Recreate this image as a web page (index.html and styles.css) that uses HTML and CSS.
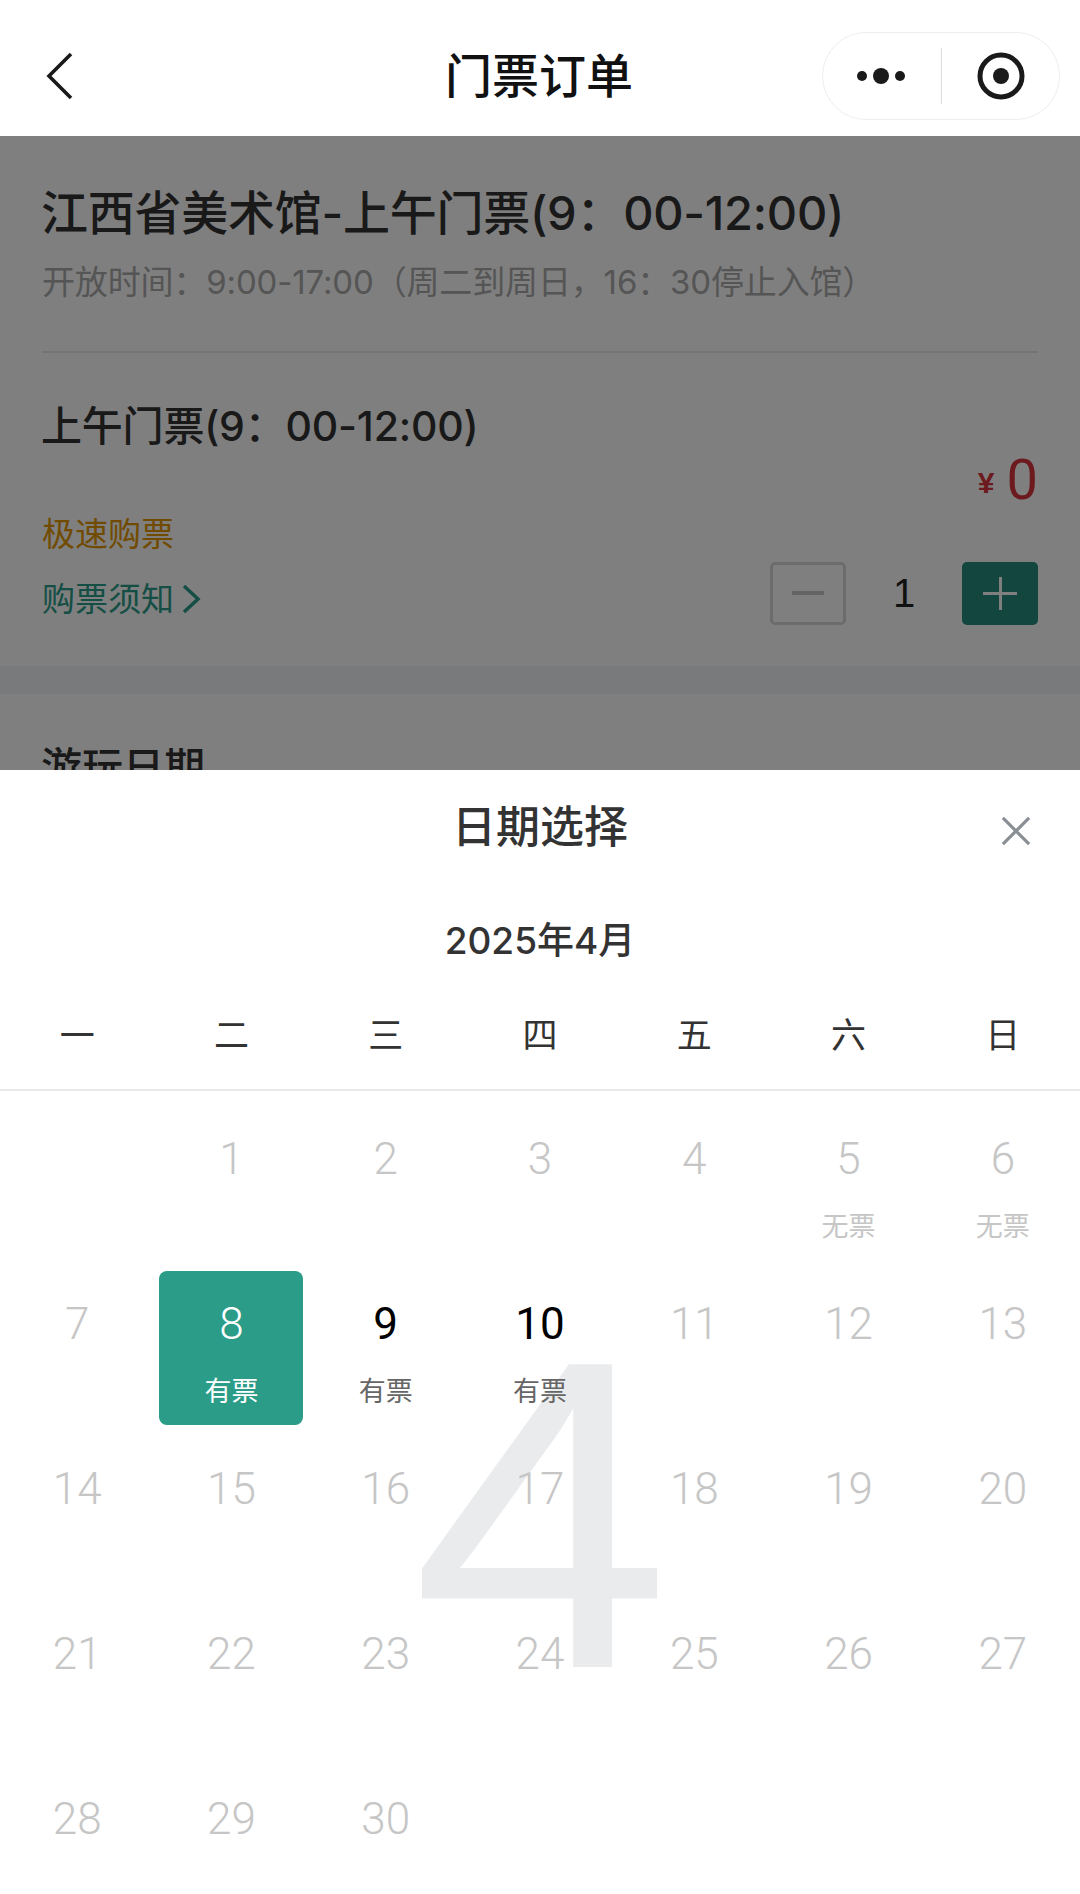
FILE: index.html
```html
<!DOCTYPE html>
<html lang="zh-CN">
<head>
<meta charset="utf-8">
<title>门票订单</title>
<link rel="stylesheet" href="styles.css">
</head>
<body>
<div class="page">
  <header class="nav">
    <svg class="back" viewBox="0 0 30 50" width="30" height="50"><path d="M27 3 L5 25 L27 47" fill="none" stroke="#1a1a1a" stroke-width="3.6"/></svg>
    <h1 class="nav-title">门票订单</h1>
    <div class="capsule">
      <svg class="capsule-more" viewBox="0 0 50 20" width="50" height="20"><circle cx="6" cy="10" r="5" fill="#1a1a1a"/><circle cx="25" cy="10" r="8" fill="#1a1a1a"/><circle cx="44" cy="10" r="5" fill="#1a1a1a"/></svg>
      <span class="capsule-line"></span>
      <svg class="capsule-close" viewBox="0 0 48 48" width="48" height="48"><circle cx="24" cy="24" r="21" fill="none" stroke="#1a1a1a" stroke-width="5"/><circle cx="24" cy="24" r="8" fill="#1a1a1a"/></svg>
    </div>
  </header>
  <main class="content">
    <section class="hero">
      <h2 class="hero-title">江西省美术馆-上午门票(9：00-12:00)</h2>
      <p class="hero-sub">开放时间：9:00-17:00（周二到周日，16：30停止入馆）</p>
    </section>
    <section class="ticket">
      <h3 class="ticket-name">上午门票(9：00-12:00)</h3>
      <div class="ticket-body">
        <div class="ticket-left">
          <div class="fast">极速购票</div>
          <div class="notice">购票须知<svg class="notice-arrow" viewBox="0 0 20 32" width="20" height="32"><path d="M3 3 L17 16 L3 29" fill="none" stroke="#2a9c88" stroke-width="3.5"/></svg></div>
        </div>
        <div class="ticket-right">
          <div class="price"><span class="yen">¥</span><span class="amount">0</span></div>
          <div class="stepper">
            <span class="step step-minus"></span>
            <span class="qty">1</span>
            <span class="step step-plus"></span>
          </div>
        </div>
      </div>
    </section>
    <div class="band"></div>
    <section class="visit">
      <h3 class="visit-title">游玩日期</h3>
    </section>
  </main>
  <div class="mask"></div>
  <aside class="sheet">
    <div class="sheet-head">
      <h2 class="sheet-title">日期选择</h2>
      <svg class="sheet-close" viewBox="0 0 32 32" width="30" height="30"><path d="M2 2 L30 30 M30 2 L2 30" stroke="#8a8f96" stroke-width="3.4" fill="none"/></svg>
    </div>
    <div class="month">2025年4月</div>
    <div class="week">
      <span>一</span><span>二</span><span>三</span><span>四</span><span>五</span><span>六</span><span>日</span>
    </div>
    <div class="calendar">
      <div class="watermark">4</div>
      <div class="days">
        <div class="day"></div>
        <div class="day"><span class="num">1</span></div>
        <div class="day"><span class="num">2</span></div>
        <div class="day"><span class="num">3</span></div>
        <div class="day"><span class="num">4</span></div>
        <div class="day"><span class="num">5</span><span class="tag">无票</span></div>
        <div class="day"><span class="num">6</span><span class="tag">无票</span></div>
        <div class="day"><span class="num">7</span></div>
        <div class="day selected"><span class="num">8</span><span class="tag">有票</span></div>
        <div class="day open"><span class="num">9</span><span class="tag">有票</span></div>
        <div class="day open"><span class="num">10</span><span class="tag">有票</span></div>
        <div class="day"><span class="num">11</span></div>
        <div class="day"><span class="num">12</span></div>
        <div class="day"><span class="num">13</span></div>
        <div class="day"><span class="num">14</span></div>
        <div class="day"><span class="num">15</span></div>
        <div class="day"><span class="num">16</span></div>
        <div class="day"><span class="num">17</span></div>
        <div class="day"><span class="num">18</span></div>
        <div class="day"><span class="num">19</span></div>
        <div class="day"><span class="num">20</span></div>
        <div class="day"><span class="num">21</span></div>
        <div class="day"><span class="num">22</span></div>
        <div class="day"><span class="num">23</span></div>
        <div class="day"><span class="num">24</span></div>
        <div class="day"><span class="num">25</span></div>
        <div class="day"><span class="num">26</span></div>
        <div class="day"><span class="num">27</span></div>
        <div class="day"><span class="num">28</span></div>
        <div class="day"><span class="num">29</span></div>
        <div class="day"><span class="num">30</span></div>
      </div>
    </div>
  </aside>
</div>
</body>
</html>
```

FILE: styles.css
```css
* { box-sizing: border-box; margin: 0; padding: 0; }
html, body { background: #fff; }
body { font-family: "Inter", "Noto Sans CJK SC", sans-serif; }
.page { position: relative; width: 1080px; height: 1894px; overflow: hidden; background: #fff; }

.nav { position: relative; height: 136px; padding-top: 16px; display: flex; align-items: center; justify-content: center; background: #fff; }
.back { position: absolute; left: 44px; top: 51px; }
.nav-title { font-size: 47px; line-height: 60px; font-weight: 500; color: #111; margin-left: -2px; }
.capsule { position: absolute; left: 822px; top: 32px; width: 238px; height: 88px; border: 1px solid #eeeeee; border-radius: 44px; display: flex; align-items: center; }
.capsule-more { margin-left: 33px; }
.capsule-line { width: 1px; height: 56px; margin-left: 35px; background: #dddddd; }
.capsule-close { margin-left: 35px; }

.hero { margin: 0 42px; padding: 49px 0 47px; border-bottom: 2px solid #e8e8e8; }
.hero-title { font-size: 47px; line-height: 56px; font-weight: 500; letter-spacing: -0.25px; color: #333; white-space: nowrap; margin-left: -1px; }
.hero-sub { margin-top: 19px; font-size: 33px; line-height: 44px; letter-spacing: -0.15px; color: #aaa; white-space: nowrap; }

.ticket { padding: 45px 42px 41px; }
.ticket-name { font-size: 41px; line-height: 56px; font-weight: 500; letter-spacing: -0.2px; color: #333; margin-left: -1px; }
.ticket-body { display: flex; justify-content: space-between; }
.ticket-left { padding-top: 58px; }
.fast { font-size: 33px; line-height: 44px; color: #e29600; }
.notice { margin-top: 21px; font-size: 33px; line-height: 44px; color: #2a9c88; display: flex; align-items: center; }
.notice-arrow { margin-left: 7px; }
.ticket-right { padding-top: 1px; display: flex; flex-direction: column; align-items: flex-end; }
.price { height: 50px; display: flex; align-items: center; color: #d9343c; }
.yen { font-family: "Liberation Sans", sans-serif; font-size: 30px; font-weight: 700; margin-right: 12px; margin-top: 6px; }
.amount { font-family: "Roboto", sans-serif; font-weight: 400; font-size: 56px; line-height: 50px; }
.stepper { margin-top: 57px; display: flex; align-items: center; }
.step { position: relative; width: 76px; height: 63px; border-radius: 5px; }
.step-minus { border: 3px solid #d8d8d8; }
.step-minus::before { content: ""; position: absolute; left: 19px; right: 19px; top: 26px; height: 4px; background: #c8c8c8; }
.qty { width: 116px; text-align: center; font-family: "Liberation Sans", sans-serif; font-size: 40px; line-height: 63px; color: #222; }
.step-plus { background: #268c7c; }
.step-plus::before { content: ""; position: absolute; left: 21px; right: 21px; top: 30px; height: 3px; background: #fff; }
.step-plus::after { content: ""; position: absolute; top: 15px; bottom: 15px; left: 37px; width: 3px; background: #fff; }

.band { height: 28px; background: #f3f4f8; }
.visit { padding: 45px 42px 0; }
.visit-title { font-size: 41px; line-height: 56px; font-weight: 500; color: #333; margin-left: -1px; }

.mask { position: absolute; left: 0; right: 0; top: 136px; bottom: 0; background: rgba(0, 0, 0, 0.5); }

.sheet { position: absolute; left: 0; right: 0; top: 770px; bottom: 0; background: #fff; }
.sheet-head { position: relative; padding-top: 27px; text-align: center; }
.sheet-title { font-size: 44px; line-height: 60px; font-weight: 500; color: #333; }
.sheet-close { position: absolute; left: 1001px; top: 46px; }
.month { margin-top: 59px; text-align: center; font-size: 37px; line-height: 50px; font-weight: 500; color: #333; }
.week { margin-top: 44px; padding-bottom: 29px; border-bottom: 2px solid #e8e8e8; display: grid; grid-template-columns: repeat(7, 1fr); text-align: center; font-size: 35px; line-height: 50px; color: #333; }

.calendar { position: relative; padding-top: 15px; }
.watermark { position: absolute; left: 2px; right: 0; top: 204px; text-align: center; font-family: "Liberation Sans", sans-serif; font-size: 440px; line-height: 440px; color: #e9ebed; transform: scaleX(1.06); }
.days { position: relative; display: grid; grid-template-columns: repeat(7, 1fr); row-gap: 11px; }
.day { position: relative; width: 144px; height: 154px; margin: 0 auto; border-radius: 8px; text-align: center; color: #c6c6c6; }
.num { display: block; padding-top: 27px; font-family: "Roboto", sans-serif; font-weight: 300; font-size: 44px; line-height: 52px; }
.tag { display: block; margin-top: 26px; font-size: 27px; line-height: 32px; }
.open .num { color: #000; font-weight: 400; }
.open .tag { color: #666; }
.selected { background: #2a9c88; color: #fff; }
```
